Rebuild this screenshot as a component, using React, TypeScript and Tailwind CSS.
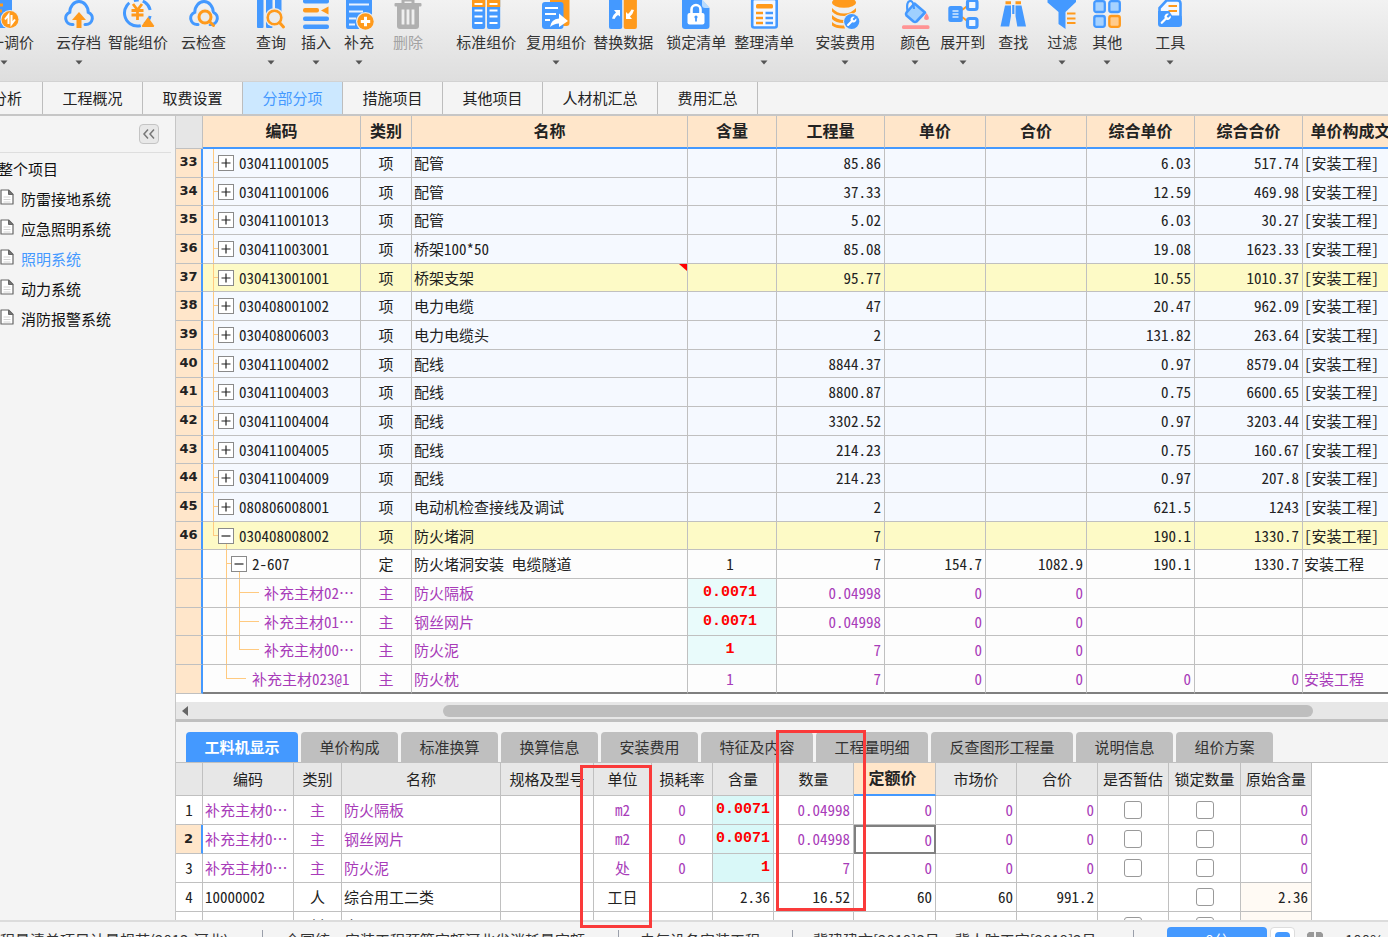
import React from "react";

const BLUE = "#4499ff";
const ORANGE = "#ff9a1c";

/* ---------- toolbar icons ---------- */

const cloud = (
  <path
    d="M9 24.500H8A6.300 6.300 0 0 1 5.800 12.300A9.200 10.800 0 1 1 24.200 12.300A6.300 6.300 0 0 1 22 24.500H21"
    fill="none"
    stroke={BLUE}
    strokeWidth="3"
    strokeLinecap="round"
  />
);

const wrench =
  "M14.7 6.3a1 1 0 0 0 0 1.4l1.6 1.6a1 1 0 0 0 1.4 0l3.77-3.77a6 6 0 0 1-7.94 7.94l-6.91 6.91a2.12 2.12 0 0 1-3-3l6.91-6.91a6 6 0 0 1 7.94-7.94l-3.76 3.76z";

const icons: Record<string, React.ReactNode> = {
  price: (
    <>
      <rect x="2" y="-4" width="21" height="32" rx="2" fill={BLUE} />
      <path d="M6 5h8M6 11h7" stroke={ORANGE} strokeWidth="3" />
      <circle cx="21" cy="19.500" r="9.500" fill="#ececec" />
      <circle cx="21" cy="19.500" r="8.500" fill={ORANGE} />
      <path d="M19.500 24V15l-3.500 4.500M22.500 15v9l3.500-4.500" fill="none" stroke="#fff" strokeWidth="2" />
    </>
  ),
  cloudUp: (
    <>
      {cloud}
      <path d="M15 12l7 8h-4.500v8h-5v-8H8z" fill={ORANGE} />
    </>
  ),
  smart: (
    <>
      <circle cx="14.500" cy="13" r="13" fill="none" stroke={BLUE} strokeWidth="3" strokeDasharray="24 5 5 4 12 6 10 4" transform="rotate(125 14.500 13)" />
      <path d="M10 4l4.500 6L19 4M8.500 10.500h12M8.500 15h12M14.500 10v10" fill="none" stroke={ORANGE} strokeWidth="2.800" />
      <path d="M25 17l6 8.500q.5 1.500-1 1.500H20q-1.500 0-1-1.500z" fill={ORANGE} />
    </>
  ),
  cloudSearch: (
    <>
      {cloud}
      <circle cx="16" cy="17" r="8.500" fill="#ebebeb" />
      <circle cx="16" cy="17" r="6" fill="none" stroke={ORANGE} strokeWidth="3" />
      <path d="M20.500 21.500l4 4" stroke={ORANGE} strokeWidth="3" strokeLinecap="round" />
    </>
  ),
  query: (
    <>
      <rect x="1" y="-3" width="6.500" height="31" rx="1" fill={BLUE} />
      <rect x="10" y="-3" width="6.500" height="31" rx="1" fill={BLUE} />
      <rect x="19" y="-3" width="6.500" height="20" rx="1" fill={BLUE} />
      <circle cx="18.500" cy="17.500" r="9.500" fill="#ebebeb" />
      <circle cx="18.500" cy="17.500" r="6.800" fill="none" stroke={ORANGE} strokeWidth="2.600" />
      <path d="M23.500 22.500l4 4.500" stroke={ORANGE} strokeWidth="3" strokeLinecap="round" />
    </>
  ),
  insert: (
    <>
      <rect x="2" y="-1" width="26" height="4.500" rx="2" fill={BLUE} />
      <rect x="2" y="16.500" width="26" height="4.500" rx="2" fill={BLUE} />
      <rect x="2" y="24.500" width="26" height="4.500" rx="2" fill={BLUE} />
      <rect x="2" y="8" width="16" height="4.500" rx="2" fill={ORANGE} />
      <path d="M27.500 6.500v8l-7.500-4z" fill={ORANGE} />
    </>
  ),
  supplement: (
    <>
      <rect x="2" y="-3" width="26" height="32" rx="2" fill={BLUE} />
      <path d="M5 4.500h20M5 11.500h14M5 18.500h7M5 24.500h6" stroke="#e8f2ff" strokeWidth="2.200" />
      <circle cx="21.500" cy="21.500" r="9.500" fill="#ececec" />
      <circle cx="21.500" cy="21.500" r="8.200" fill={ORANGE} />
      <path d="M21.500 16.800v9.400M16.800 21.500h9.400" stroke="#fff" strokeWidth="3" />
    </>
  ),
  trash: (
    <>
      <path d="M10 3V0h10v3" fill="none" stroke="#b0b0b0" strokeWidth="3" />
      <rect x="1.500" y="3" width="27" height="3.500" rx="1" fill="#b0b0b0" />
      <path d="M4 6h22v20q0 3-3 3H7q-3 0-3-3z" fill="#b0b0b0" />
      <path d="M10 9.500v15M15 9.500v15M20 9.500v15" stroke="#efefef" strokeWidth="2.800" />
    </>
  ),
  standard: (
    <>
      <rect x="1" y="-3" width="13.200" height="32" rx="2" fill={BLUE} />
      <rect x="16" y="-3" width="13.200" height="32" rx="2" fill={BLUE} />
      <path d="M1 0h13.200v7H1zM16 0h13.200v7H16z" fill={ORANGE} />
      <path d="M3.500 4h8M18.500 4h8M3.500 10.500h8M18.500 10.500h8M3.500 16.500h8M18.500 16.500h8M3.500 23h8M18.500 23h8" stroke="#fff" strokeWidth="2.200" />
    </>
  ),
  reuse: (
    <>
      <rect x="9" y="-3" width="19.500" height="29" rx="3" fill={ORANGE} />
      <rect x="1" y="2" width="21.500" height="27" rx="3" fill={BLUE} />
      <path d="M4 8h13M4 14h11M4 20h5" stroke="#fff" strokeWidth="2.200" />
      <path d="M9 27q1-8 9-8.500v-5l9 7.500l-9 6v-3.500q-5 0-9 3.500z" fill="#fff" />
    </>
  ),
  replace: (
    <>
      <rect x="1" y="-3" width="13.200" height="32" rx="2" fill={BLUE} />
      <rect x="15.700" y="-3" width="13.200" height="32" rx="2" fill={ORANGE} />
      <path d="M4 18.500q1-4 4-6l-2-2.500h6v6.500l-2-1.500q-2 1-3.500 4z" fill="#fff" />
      <path d="M26 10q-1 4-4 6.500l2 2.500h-6v-7l2 2q2-1.500 3.500-4.500z" fill="#fff" />
    </>
  ),
  lock: (
    <>
      <path d="M1 0h20l7.500 8v18q0 3-3 3h-21.500q-3 0-3-3z" fill={BLUE} />
      <path d="M21-1v6q0 3 3 3h4.500z" fill="#b9dcff" />
      <rect x="6.500" y="13" width="17" height="11.500" rx="2" fill="#fff" />
      <path d="M10.500 14V9.500a4.500 4.500 0 0 1 9 0V14" fill="none" stroke="#fff" strokeWidth="2.600" />
      <circle cx="15" cy="17" r="1.600" fill={BLUE} />
      <path d="M15 17v4.500" stroke={BLUE} strokeWidth="1.800" />
    </>
  ),
  tidy: (
    <>
      <rect x="3.200" y="-1" width="24.500" height="28.500" rx="2" fill="#f5f9ff" stroke={BLUE} strokeWidth="2.600" />
      <rect x="7" y="4" width="17" height="4.500" rx="1.500" fill={ORANGE} />
      <path d="M7 13h7M7 18h7M7 23h7" stroke={ORANGE} strokeWidth="2.300" />
      <path d="M16.500 13h7.500M16.500 18h7.500M16.500 23h7.500" stroke={BLUE} strokeWidth="2.300" />
    </>
  ),
  fee: (
    <>
      <ellipse cx="14" cy="2.500" rx="12" ry="5.200" fill={ORANGE} />
      <path d="M2 8q5 5.500 12 5.500T26 8v3.500q-4 4.500-12 4.500T2 11.500zM2 15q5 5 12 5h3l-2 3q-9 .5-13-4zM2 22q4 4 12 3.500l1 3Q6 29 2 25.500z" fill={ORANGE} />
      <circle cx="21.700" cy="21.500" r="8.600" fill="#ebebeb" />
      <circle cx="21.700" cy="21.500" r="7.600" fill={BLUE} />
      <path d={wrench} transform="translate(15.500 15.500) scale(.5)" fill="#fff" />
    </>
  ),
  color: (
    <>
      <path d="M14.500 3.500L25 12.500L16.500 21.500q-1.500 1-3 0L6.500 15.500q-1-1.500 0-3z" fill="#9fd0ff" stroke={BLUE} strokeWidth="2.600" strokeLinejoin="round" />
      <path d="M7.500 11Q6 1 10.500 1Q13.500 1 14 9" fill="none" stroke={BLUE} strokeWidth="2.200" />
      <path d="M26.500 13q5 7 0 7t0-7z" fill="#ff8d8d" />
      <rect x="2" y="25.200" width="27.500" height="3.800" rx="1.500" fill="#ff9494" />
    </>
  ),
  expand: (
    <>
      <path d="M14 10l8-6M14 17l8 6" stroke={ORANGE} strokeWidth="2" />
      <rect x="0.300" y="6" width="14.500" height="16" rx="2.500" fill={BLUE} />
      <path d="M4.500 11h6M4.500 14h6M4.500 17h6" stroke="#d6eaff" strokeWidth="1.600" />
      <rect x="19.500" y="0.500" width="9.500" height="9" rx="2" fill="#f0f7ff" stroke={BLUE} strokeWidth="3.200" />
      <rect x="19.500" y="18.500" width="9.500" height="9" rx="2" fill="#f0f7ff" stroke={BLUE} strokeWidth="3.200" />
    </>
  ),
  find: (
    <>
      <path d="M7.500 1.300h5.500v3H7.500zM17.500 1.300H23v3h-5.500z" fill={ORANGE} />
      <path d="M7 5.500h6v10.500l-1.800 10.500H2.500zM17.500 5.500h6l4.500 21h-8.700L17.500 16z" fill={BLUE} />
      <path d="M15.300 5v9" stroke={BLUE} strokeWidth="2.200" />
    </>
  ),
  filter: (
    <>
      <path d="M.5 0h28.500v2L18.500 12v17l-7-5V12L.5 2.500z" fill={BLUE} />
      <path d="M20 13.500h8.500M20 18.500h8.500M20 23h8.500" stroke={ORANGE} strokeWidth="2.200" />
    </>
  ),
  other: (
    <>
      <rect x="2.300" y="1.200" width="10.500" height="10.800" rx="2" fill="#a6d2ff" stroke={BLUE} strokeWidth="2.300" />
      <rect x="17.300" y="1.200" width="10.500" height="10.800" rx="2" fill="#a6d2ff" stroke={BLUE} strokeWidth="2.300" />
      <rect x="2.300" y="16" width="10.500" height="10.800" rx="2" fill="#a6d2ff" stroke={BLUE} strokeWidth="2.300" />
      <rect x="17.300" y="16" width="10.500" height="10.800" rx="2" fill="#ffcb8c" stroke={ORANGE} strokeWidth="2.300" />
    </>
  ),
  tools: (
    <>
      <path d="M4.500 14V8L11.500.5H22.500q3 0 3 3V17" fill="#f4f9ff" stroke={BLUE} strokeWidth="2.600" />
      <path d="M13.500 6h8.500M13.500 11h8.500" stroke={ORANGE} strokeWidth="2.200" />
      <path d="M3 11h11l3 4.500h8q2 0 2 2V24q0 3-3 3H6q-3 0-3-3z" fill={BLUE} />
      <path d={wrench} transform="translate(4 12.500) scale(.54)" fill="#fff" />
    </>
  ),
};

const tools: { label: string; icon: string; gap: string; drop?: boolean; off?: boolean }[] = [
  { label: "统一调价", icon: "price", gap: "-ml-[26px]", drop: true },
  { label: "云存档", icon: "cloudUp", gap: "ml-[22px]", drop: true },
  { label: "智能组价", icon: "smart", gap: "ml-[7px]" },
  { label: "云检查", icon: "cloudSearch", gap: "ml-[13px]" },
  { label: "查询", icon: "query", gap: "ml-[30px]", drop: true },
  { label: "插入", icon: "insert", gap: "ml-[15px]", drop: true },
  { label: "补充", icon: "supplement", gap: "ml-[13px]", drop: true },
  { label: "删除", icon: "trash", gap: "ml-[19px]", off: true },
  { label: "标准组价", icon: "standard", gap: "ml-[33px]" },
  { label: "复用组价", icon: "reuse", gap: "ml-[10px]", drop: true },
  { label: "替换数据", icon: "replace", gap: "ml-[7px]" },
  { label: "锁定清单", icon: "lock", gap: "ml-[13px]" },
  { label: "整理清单", icon: "tidy", gap: "ml-[8px]", drop: true },
  { label: "安装费用", icon: "fee", gap: "ml-[21px]", drop: true },
  { label: "颜色", icon: "color", gap: "ml-[25px]", drop: true },
  { label: "展开到", icon: "expand", gap: "ml-[10px]", drop: true },
  { label: "查找", icon: "find", gap: "ml-[13px]" },
  { label: "过滤", icon: "filter", gap: "ml-[19px]", drop: true },
  { label: "其他", icon: "other", gap: "ml-[15px]", drop: true },
  { label: "工具", icon: "tools", gap: "ml-[33px]", drop: true },
];

function Toolbar() {
  return (
    <header className="flex h-[82px] shrink-0 items-start overflow-hidden border-b border-[#d2d2d2] bg-linear-to-b from-[#f2f2f2] to-[#dedede]">
      {tools.map((t) => (
        <button
          key={t.label}
          type="button"
          disabled={t.off}
          className={`flex shrink-0 flex-col items-center ${t.gap} ${t.off ? "text-[#a3a3a3]" : "text-[#333]"}`}
        >
          <svg width="30" height="29" viewBox="0 0 30 29" aria-hidden="true" className="overflow-visible">
            {icons[t.icon]}
          </svg>
          <span className="mt-[3px] whitespace-nowrap leading-5">{t.label}</span>
          {t.drop && (
            <svg width="8" height="5" viewBox="0 0 8 5" aria-hidden="true" className="mt-2">
              <path d="M.5.5h7L4 4.500z" fill="#555" />
            </svg>
          )}
        </button>
      ))}
    </header>
  );
}

const pages = [
  { label: "造价分析", width: "w-[43px] justify-end pr-5" },
  { label: "工程概况", width: "w-[100px] justify-center" },
  { label: "取费设置", width: "w-[100px] justify-center" },
  { label: "分部分项", width: "w-[100px] justify-center", active: true },
  { label: "措施项目", width: "w-[100px] justify-center" },
  { label: "其他项目", width: "w-[100px] justify-center" },
  { label: "人材机汇总", width: "w-[115px] justify-center" },
  { label: "费用汇总", width: "w-[100px] justify-center" },
];

function PageTabs() {
  return (
    <nav className="flex h-[34px] shrink-0 overflow-hidden border-b-2 border-[#c6c6c6] bg-[#f4f4f4]">
      {pages.map((p) => (
        <button
          key={p.label}
          type="button"
          className={`flex shrink-0 items-center overflow-hidden whitespace-nowrap border-r border-[#bdbdbd] ${p.width} ${
            p.active ? "bg-[#cce8ff] text-[#4499ff]" : "text-[#222]"
          }`}
        >
          {p.label}
        </button>
      ))}
    </nav>
  );
}

const systems = ["防雷接地系统", "应急照明系统", "照明系统", "动力系统", "消防报警系统"];

function Sidebar() {
  return (
    <aside className="w-[176px] shrink-0 overflow-hidden border-r border-[#c6c6c6] bg-[#f4f4f4] text-[#111]">
      <div className="mr-1 flex h-[37px] items-center justify-end border-b border-[#dedede] pr-3">
        <button
          type="button"
          aria-label="收起"
          className="flex h-5 w-5 items-center justify-center rounded-sm border border-[#c4c4c4] bg-[#e8e8e8]"
        >
          <svg width="14" height="12" viewBox="0 0 14 12" fill="none" stroke="#777" strokeWidth="1.500" aria-hidden="true">
            <path d="M6 1.500L2 6l4 4.500M12 1.500L8 6l4 4.500" />
          </svg>
        </button>
      </div>
      <div className="-ml-0.5 flex h-[31px] items-center">整个项目</div>
      <ul>
        {systems.map((s) => (
          <li key={s}>
            <a href="#" className={`flex h-[30px] items-center gap-[7px] ${s === "照明系统" ? "text-[#4499ff]" : ""}`}>
              <svg width="14" height="16" viewBox="0 0 14 16" aria-hidden="true" className="-mt-1">
                <path d="M1 1h7.500L13 5.500V15H1z" fill="#fff" stroke="#666" strokeWidth="1.200" strokeLinejoin="round" />
                <path d="M8.500 1v4.500H13z" fill="#777" stroke="#666" />
                <path d="M3.500 8h7M3.500 10.500h7M3.500 13h7" stroke="#d4d4d4" />
              </svg>
              <span className="whitespace-nowrap">{s}</span>
            </a>
          </li>
        ))}
      </ul>
    </aside>
  );
}

/* ---------- bill table ---------- */

type Bill = {
  no: string;
  code: string;
  kind: string;
  name: string;
  content?: string;
  qty: string;
  price?: string;
  total?: string;
  unit?: string;
  sum?: string;
  file?: string;
  tree?: "item" | "open" | "sub" | "leaf" | "leafEnd" | "end";
};

const item = (no: string, code: string, name: string, qty: string, unit: string, sum: string): Bill => ({
  no, code, kind: "项", name, qty, unit, sum, file: "[安装工程]", tree: "item",
});

const bills: Bill[] = [
  item("33", "030411001005", "配管", "85.86", "6.03", "517.74"),
  item("34", "030411001006", "配管", "37.33", "12.59", "469.98"),
  item("35", "030411001013", "配管", "5.02", "6.03", "30.27"),
  item("36", "030411003001", "桥架100*50", "85.08", "19.08", "1623.33"),
  item("37", "030413001001", "桥架支架", "95.77", "10.55", "1010.37"),
  item("38", "030408001002", "电力电缆", "47", "20.47", "962.09"),
  item("39", "030408006003", "电力电缆头", "2", "131.82", "263.64"),
  item("40", "030411004002", "配线", "8844.37", "0.97", "8579.04"),
  item("41", "030411004003", "配线", "8800.87", "0.75", "6600.65"),
  item("42", "030411004004", "配线", "3302.52", "0.97", "3203.44"),
  item("43", "030411004005", "配线", "214.23", "0.75", "160.67"),
  item("44", "030411004009", "配线", "214.23", "0.97", "207.8"),
  item("45", "080806008001", "电动机检查接线及调试", "2", "621.5", "1243"),
  { ...item("46", "030408008002", "防火堵洞", "7", "190.1", "1330.7"), tree: "open" },
  { no: "", code: "2-607", kind: "定", name: "防火堵洞安装 电缆隧道", content: "1", qty: "7", price: "154.7", total: "1082.9", unit: "190.1", sum: "1330.7", file: "安装工程", tree: "sub" },
  { no: "", code: "补充主材02", kind: "主", name: "防火隔板", content: "0.0071", qty: "0.04998", price: "0", total: "0", tree: "leaf" },
  { no: "", code: "补充主材01", kind: "主", name: "钢丝网片", content: "0.0071", qty: "0.04998", price: "0", total: "0", tree: "leaf" },
  { no: "", code: "补充主材00", kind: "主", name: "防火泥", content: "1", qty: "7", price: "0", total: "0", tree: "leafEnd" },
  { no: "", code: "补充主材023@1", kind: "主", name: "防火枕", content: "1", qty: "7", price: "0", total: "0", unit: "0", sum: "0", file: "安装工程", tree: "end" },
];

const billHeads = ["编码", "类别", "名称", "含量", "工程量", "单价", "合价", "综合单价", "综合合价", "单价构成文件"];

function Toggle({ open }: { open: boolean }) {
  return (
    <button
      type="button"
      aria-label={open ? "折叠" : "展开"}
      className="relative flex h-4 w-4 shrink-0 items-center justify-center border border-[#8a8a8a] bg-white"
    >
      <svg width="10" height="10" viewBox="0 0 10 10" stroke="#222" strokeWidth="1.200" aria-hidden="true">
        <path d={open ? "M.5 5h9" : "M.5 5h9M5 .5v9"} />
      </svg>
    </button>
  );
}

const guide = "absolute border-[#ffca80]";

function Guides({ tree }: { tree: Bill["tree"] }) {
  switch (tree) {
    case "item":
      return (
        <>
          <i className={`${guide} inset-y-0 left-[10px] border-l`} />
          <i className={`${guide} left-[10px] top-[13px] w-[5px] border-t`} />
        </>
      );
    case "open":
      return (
        <>
          <i className={`${guide} left-[10px] top-0 h-[14px] w-[5px] border-b border-l`} />
          <i className={`${guide} bottom-0 left-[23px] top-[14px] border-l`} />
        </>
      );
    case "sub":
      return (
        <>
          <i className={`${guide} inset-y-0 left-[23px] border-l`} />
          <i className={`${guide} left-[23px] top-[13px] w-[5px] border-t`} />
          <i className={`${guide} bottom-0 left-[36px] top-[14px] border-l`} />
        </>
      );
    case "leaf":
      return (
        <>
          <i className={`${guide} inset-y-0 left-[23px] border-l`} />
          <i className={`${guide} inset-y-0 left-[36px] border-l`} />
          <i className={`${guide} left-[36px] top-[13px] w-5 border-t`} />
        </>
      );
    case "leafEnd":
      return (
        <>
          <i className={`${guide} inset-y-0 left-[23px] border-l`} />
          <i className={`${guide} left-[36px] top-0 h-[14px] w-5 border-b border-l`} />
        </>
      );
    default:
      return <i className={`${guide} left-[23px] top-0 h-[14px] w-5 border-b border-l`} />;
  }
}

const indent = {
  item: "pl-[15px]",
  open: "pl-[15px]",
  sub: "pl-7",
  leaf: "pl-[61px]",
  leafEnd: "pl-[61px]",
  end: "pl-[49px]",
};

function BillTable() {
  const cell = "overflow-hidden whitespace-nowrap border-b border-r border-[#c0c0c0] p-0";
  const num = `${cell} pr-[3px] text-right`;
  return (
    <div className="overflow-hidden bg-white">
      <table className="h-[578px] w-[calc(100%+27px)] table-fixed border-separate border-spacing-0">
        <colgroup>
          <col className="w-[27px]" />
          <col className="w-[158px]" />
          <col className="w-[51px]" />
          <col />
          <col className="w-[89px]" />
          <col className="w-[108px]" />
          <col className="w-[101px]" />
          <col className="w-[101px]" />
          <col className="w-[108px]" />
          <col className="w-[108px]" />
          <col className="w-[112px]" />
        </colgroup>
        <thead>
          <tr className="h-[33px]">
            <th aria-label="序号" className="border-b border-r border-[#c0c0c0] bg-[#e6e6e6] p-0" />
            {billHeads.map((h) => (
              <th
                key={h}
                scope="col"
                className="overflow-hidden whitespace-nowrap border-b-2 border-r border-b-[#4499ff] border-r-[#c0c0c0] bg-[#ffe6ca] p-0 pb-[3px] text-base leading-5"
              >
                {h}
              </th>
            ))}
          </tr>
        </thead>
        <tbody>
          {bills.map((b, i) => {
            const main = b.kind === "主";
            const marked = b.no === "37" || b.no === "46";
            const bg = marked ? "bg-[#fdfac6]" : b.no ? "bg-[#f5f9ff]" : "bg-[#fdfdfd]";
            const last = i === bills.length - 1 ? "border-b-2 border-b-[#808080]" : "";
            const hot = b.tree === "leaf" || b.tree === "leafEnd";
            return (
              <tr key={i} className={`h-7 ${bg} ${main ? "text-[#a83cb9]" : ""}`}>
                <th
                  scope="row"
                  className="border-b border-r-2 border-b-[#c0c0c0] border-r-[#4499ff] bg-[#ffe6ca] p-0 pb-0.5 font-['DejaVu_Sans'] text-[13px] leading-5"
                >
                  {b.no}
                </th>
                <td className={`relative ${cell} ${last}`}>
                  <Guides tree={b.tree} />
                  <div className={`flex items-center gap-[5px] ${indent[b.tree ?? "item"]}`}>
                    {!main && <Toggle open={b.tree !== "item"} />}
                    <span>
                      {b.code}
                      {hot && <span className="[font-feature-settings:normal]">⋯</span>}
                    </span>
                  </div>
                </td>
                <td className={`${cell} text-center ${last}`}>{b.kind}</td>
                <td className={`relative ${cell} pl-0.5 ${last}`}>
                  {b.name}
                  {b.no === "37" && (
                    <svg width="8" height="7" viewBox="0 0 8 7" aria-hidden="true" className="absolute right-0 top-0">
                      <path d="M0 0h8v7z" fill="#f00" />
                    </svg>
                  )}
                </td>
                <td
                  className={`${cell} pr-1 text-center ${last} ${
                    hot ? "bg-[#e9fbfb] font-['Liberation_Mono'] font-bold text-[#f00]" : ""
                  }`}
                >
                  {b.content}
                </td>
                <td className={`${num} ${last}`}>{b.qty}</td>
                <td className={`${num} ${last}`}>{b.price}</td>
                <td className={`${num} ${last}`}>{b.total}</td>
                <td className={`${num} ${last}`}>{b.unit}</td>
                <td className={`${num} ${last}`}>{b.sum}</td>
                <td className={`${cell} pl-px ${last}`}>{b.file}</td>
              </tr>
            );
          })}
        </tbody>
      </table>
    </div>
  );
}

function ScrollBar() {
  return (
    <div className="mt-2 flex h-[20px] shrink-0 items-center border-b-[3px] border-[#c0c0c0] bg-[#e7e7e7] pl-[6px]">
      <button type="button" aria-label="向左滚动">
        <svg width="6" height="10" viewBox="0 0 6 10" aria-hidden="true">
          <path d="M6 0v10L0 5z" fill="#666" />
        </svg>
      </button>
      <div className="ml-[255px] mr-[75px] h-3 flex-1 rounded-full bg-[#bebebe]" />
    </div>
  );
}

/* ---------- detail pane ---------- */

const details = [
  { label: "工料机显示", width: "w-[112px]" },
  { label: "单价构成", width: "w-[97px]" },
  { label: "标准换算", width: "w-[97px]" },
  { label: "换算信息", width: "w-[97px]" },
  { label: "安装费用", width: "w-[97px]" },
  { label: "特征及内容", width: "w-[112px]" },
  { label: "工程量明细", width: "w-[112px]" },
  { label: "反查图形工程量", width: "w-[142px]" },
  { label: "说明信息", width: "w-[97px]" },
  { label: "组价方案", width: "w-[97px]" },
];

function DetailTabs() {
  return (
    <div className="flex h-[41px] shrink-0 items-end gap-[3px] border-b border-[#c0c0c0] bg-[#f4f4f4] pl-[10px]">
      {details.map((d, i) => (
        <button
          key={d.label}
          type="button"
          className={`h-[30px] shrink-0 whitespace-nowrap rounded-t-sm ${d.width} ${
            i === 0 ? "bg-[#4499ff] font-bold text-white" : "bg-[#bfbfbf] text-[#333]"
          }`}
        >
          {d.label}
        </button>
      ))}
    </div>
  );
}

type Detail = {
  code: string;
  more?: boolean;
  kind: string;
  name: string;
  unit: string;
  loss: string;
  content: string;
  qty: string;
  fixed: string;
  market: string;
  total: string;
  origin: string;
  estimate: boolean;
};

const detailRows: Detail[] = [
  { code: "补充主材0", more: true, kind: "主", name: "防火隔板", unit: "m2", loss: "0", content: "0.0071", qty: "0.04998", fixed: "0", market: "0", total: "0", origin: "0", estimate: true },
  { code: "补充主材0", more: true, kind: "主", name: "钢丝网片", unit: "m2", loss: "0", content: "0.0071", qty: "0.04998", fixed: "0", market: "0", total: "0", origin: "0", estimate: true },
  { code: "补充主材0", more: true, kind: "主", name: "防火泥", unit: "处", loss: "0", content: "1", qty: "7", fixed: "0", market: "0", total: "0", origin: "0", estimate: true },
  { code: "10000002", kind: "人", name: "综合用工二类", unit: "工日", loss: "", content: "2.36", qty: "16.52", fixed: "60", market: "60", total: "991.2", origin: "2.36", estimate: false },
  { code: "", kind: "材", name: "水", unit: "", loss: "", content: "", qty: "", fixed: "", market: "", total: "", origin: "", estimate: true },
];

const detailHeads = ["编码", "类别", "名称", "规格及型号", "单位", "损耗率", "含量", "数量", "定额价", "市场价", "合价", "是否暂估", "锁定数量", "原始含量"];

function Tick({ label }: { label: string }) {
  return (
    <input
      type="checkbox"
      aria-label={label}
      className="mx-auto block h-[18px] w-[18px] appearance-none rounded-[3px] border border-[#999] bg-white"
    />
  );
}

function DetailTable() {
  const cell = "overflow-hidden whitespace-nowrap border-b border-r border-[#c0c0c0] p-0";
  const num = `${cell} pr-[3px] text-right`;
  return (
    <div className="min-h-0 flex-1 overflow-hidden bg-white">
      <table className="w-[1136px] table-fixed border-separate border-spacing-0">
        <colgroup>
          <col className="w-[27px]" />
          <col className="w-[91px]" />
          <col className="w-[48px]" />
          <col className="w-[159px]" />
          <col className="w-[93px]" />
          <col className="w-[58px]" />
          <col className="w-[61px]" />
          <col className="w-[61px]" />
          <col className="w-[80px]" />
          <col className="w-[82px]" />
          <col className="w-[81px]" />
          <col className="w-[81px]" />
          <col className="w-[71px]" />
          <col className="w-[72px]" />
          <col className="w-[71px]" />
        </colgroup>
        <thead>
          <tr className="h-[33px]">
            <th aria-label="序号" className={`${cell} bg-[#e7e7e7]`} />
            {detailHeads.map((h) => (
              <th
                key={h}
                scope="col"
                className={`overflow-hidden whitespace-nowrap border-r border-r-[#c0c0c0] p-0 ${
                  h === "定额价"
                    ? "border-b-2 border-b-[#4499ff] bg-[#ffe6ca] pb-[3px] pr-1 text-base font-bold leading-5"
                    : "border-b border-b-[#c0c0c0] bg-[#e7e7e7] font-normal"
                }`}
              >
                {h}
              </th>
            ))}
          </tr>
        </thead>
        <tbody>
          {detailRows.map((d, i) => {
            const main = d.kind === "主";
            const on = i === 1;
            return (
              <tr key={i} className={`h-[29px] ${main ? "text-[#a83cb9]" : ""}`}>
                <th
                  scope="row"
                  className={
                    on
                      ? "border-b border-r-2 border-b-[#c0c0c0] border-r-[#4499ff] bg-[#ffe6ca] p-0 font-['DejaVu_Sans'] text-[13px] leading-5 text-[#222]"
                      : `${cell} font-normal text-[#222]`
                  }
                >
                  {i < 4 ? i + 1 : ""}
                </th>
                <td className={`${cell} pl-0.5`}>
                  {d.code}
                  {d.more && <span className="[font-feature-settings:normal]">⋯</span>}
                </td>
                <td className={`${cell} text-center`}>{d.kind}</td>
                <td className={`${cell} pl-0.5`}>{d.name}</td>
                <td className={cell} />
                <td className={`${cell} text-center`}>{d.unit}</td>
                <td className={`${cell} text-center`}>{d.loss}</td>
                <td className={`${num} ${main ? "bg-[#d9f8f8] font-['Liberation_Mono'] font-bold text-[#f00]" : ""}`}>
                  {d.content}
                </td>
                <td className={num}>{d.qty}</td>
                <td className={on ? "border-2 border-[#808080] p-0 pr-[2px] text-right" : num}>{d.fixed}</td>
                <td className={num}>{d.market}</td>
                <td className={num}>{d.total}</td>
                <td className={cell}>{d.estimate && <Tick label="是否暂估" />}</td>
                <td className={cell}>
                  <Tick label="锁定数量" />
                </td>
                <td className={`${num} ${main ? "" : "bg-[#fffaf4]"}`}>{d.origin}</td>
              </tr>
            );
          })}
        </tbody>
      </table>
    </div>
  );
}

function StatusBar() {
  const bar = <i className="h-5 shrink-0 border-l border-[#9a9faa]" />;
  return (
    <footer className="h-[17px] shrink-0 overflow-hidden border-t-2 border-[#dcdcdc] bg-[#f4f4f4] text-[#333]">
      <div className="flex h-9 items-center whitespace-nowrap">
        <span className="-ml-[15px] w-[277px] shrink-0">工程量清单项目计量规范(2013-河北)</span>
        {bar}
        <span className="w-[355px] shrink-0 pl-[22px]">全国统一安装工程预算定额河北省消耗量定额</span>
        {bar}
        <span className="w-[173px] shrink-0 pl-[21px]">电气设备安装工程</span>
        {bar}
        <span className="w-[340px] shrink-0 pl-[20px]">冀建建市[2019]3号、冀人防工字[2019]2号</span>
        {bar}
        <button type="button" className="ml-auto h-[26px] w-[100px] shrink-0 rounded-t-sm bg-[#4499ff] text-white">
          0分
        </button>
        <button type="button" aria-label="视图" className="ml-[3px] flex h-[26px] w-[25px] shrink-0 items-center justify-center rounded-sm border border-[#ddd] bg-white">
          <i className="h-4 w-[15px] rounded-sm bg-[#4499ff]" />
        </button>
        <svg width="16" height="16" viewBox="0 0 16 16" aria-hidden="true" className="ml-[12px] shrink-0">
          <path d="M2 0h5v7H0V2zM9 0h5l2 2v5H9zM0 9h7v7H0zM9 9h7v7H9z" fill="#999" />
        </svg>
        <span className="ml-[22px] w-[43px] shrink-0">100%</span>
      </div>
    </footer>
  );
}

export default function App() {
  return (
    <div className="flex h-screen w-full flex-col overflow-hidden bg-[#f4f4f4] font-['Noto_Sans_CJK_SC',sans-serif] text-[15px] leading-5 text-[#222]">
      <Toolbar />
      <PageTabs />
      <div className="flex min-h-0 flex-1">
        <Sidebar />
        <main className="relative flex min-w-0 flex-1 flex-col overflow-hidden bg-white [font-feature-settings:'hwid']">
          <BillTable />
          <ScrollBar />
          <DetailTabs />
          <DetailTable />
          <div className="pointer-events-none absolute left-[600px] top-[614px] h-[181px] w-[90px] border-[3px] border-[#fa3a3a]" />
        </main>
      </div>
      <div className="relative shrink-0">
        <StatusBar />
        <div className="pointer-events-none absolute bottom-[9px] left-[580px] h-[163px] w-[72px] border-[3px] border-[#fa3a3a]" />
      </div>
    </div>
  );
}
